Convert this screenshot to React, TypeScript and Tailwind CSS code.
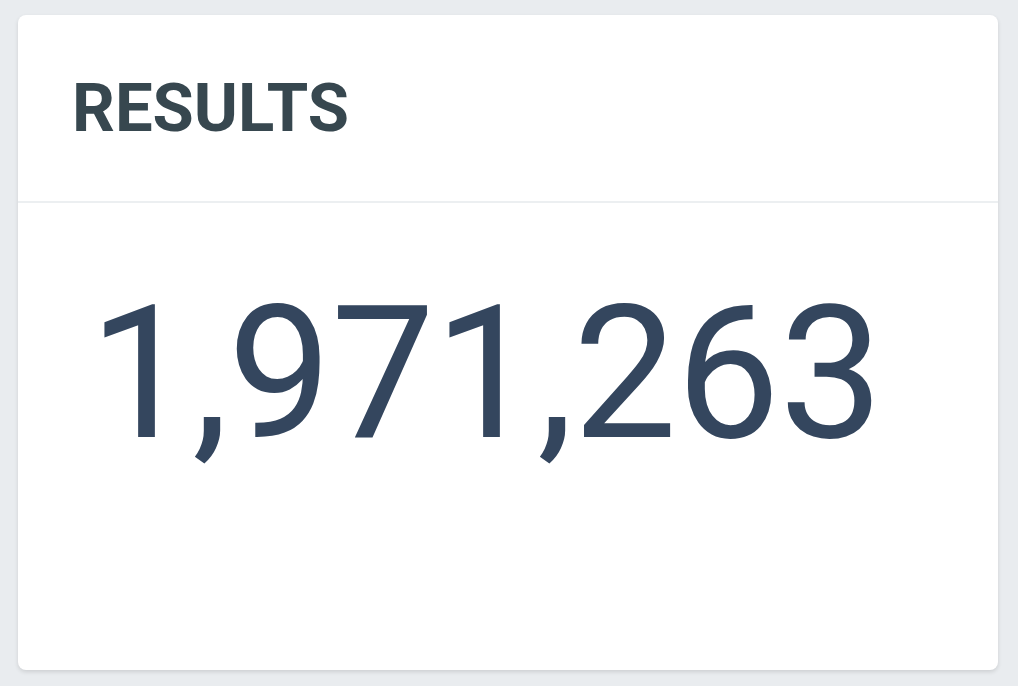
export default function App() {
  return (
    <div
      className="min-h-screen bg-[#e9ecef] pt-[15px] pl-[18px] pr-[20px]"
      style={{ fontFamily: 'Roboto, "Liberation Sans", sans-serif' }}
    >
      <div className="h-[655px] rounded-[8px] bg-white shadow-[0_2px_4px_rgba(0,0,0,0.12)] flex flex-col">
        <div className="h-[188px] flex items-center px-[54px] border-b-2 border-[#eceff1]">
          <h2 className="text-[67px] leading-none font-bold text-[#37474f]">RESULTS</h2>
        </div>
        <div className="pt-[78px] pl-[71px]">
          <div className="text-[185px] leading-none font-normal tracking-[-0.8px] text-[#34465e]">1,971,263</div>
        </div>
      </div>
    </div>
  );
}
